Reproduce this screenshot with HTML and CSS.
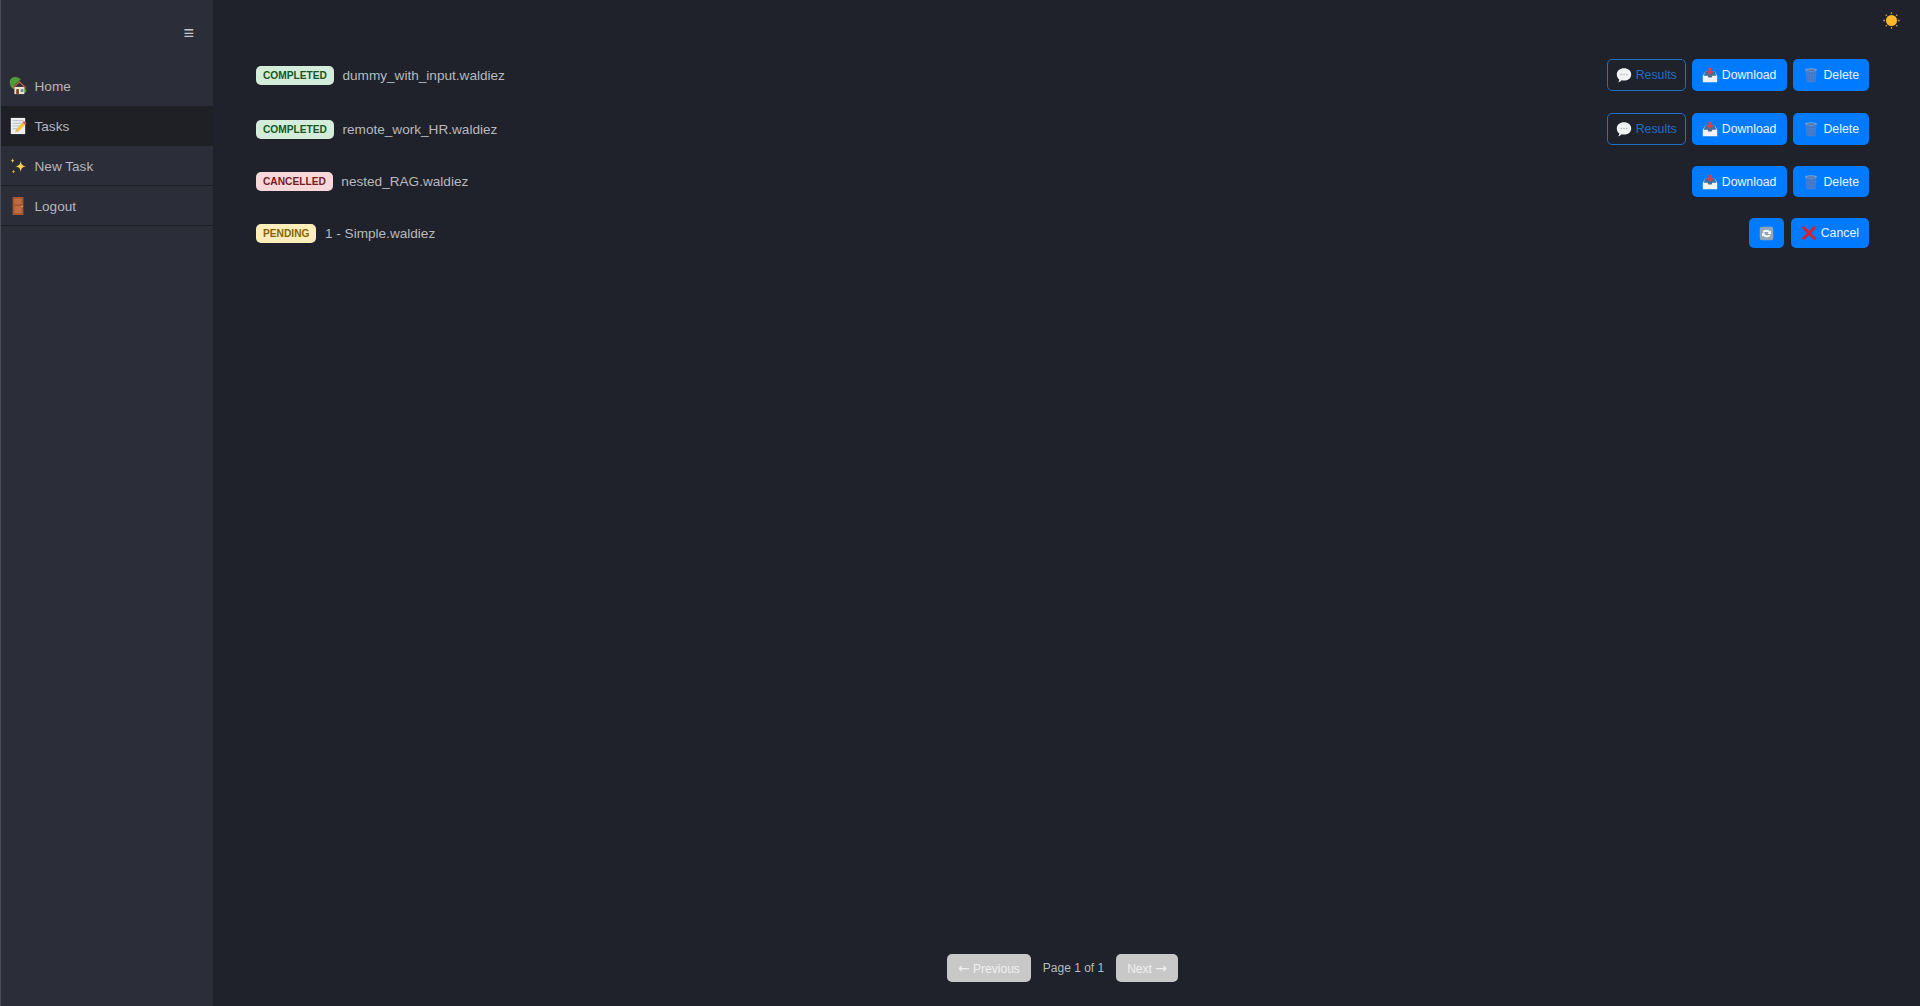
FILE: index.html
```html
<!DOCTYPE html>
<html lang="en">
<head>
    <meta charset="UTF-8">
    <meta name="viewport" content="width=device-width, initial-scale=1.0">
    <title>Tasks</title>
    <link rel="stylesheet" href="styles.css">
</head>
<body>
    <!-- Emoji drawn once, reused below -->
    <svg class="sprites" aria-hidden="true">
        <symbol id="i-home" viewBox="0 0 20 20">
            <path d="M1 7C0 3 3 0 7 0c3 0 5 1 6 3L6 9l0 5C3 13 1 10 1 7z" fill="#4f9a3a"/>
            <path d="M16 12c2 0 4 2 3 5l-3 1z" fill="#4f9a3a"/>
            <path d="M6 11h11v8H6z" fill="#efe3cf"/>
            <path d="M4 11.500 11.500 4.500 19 11.500l-1 1-6.500-6-6.500 6z" fill="#c0603f"/>
            <path d="M8 13.500h3V19H8z" fill="#7a4528"/>
            <path d="M13 13.500h3v3h-3z" fill="#5d86a8"/>
        </symbol>
        <symbol id="i-memo" viewBox="0 0 20 20">
            <path d="M2 1h16v18H2z" fill="#eceef0"/>
            <path d="M4 4h12M4 7h12M4 10h8M4 13h5" stroke="#b4bcc6" stroke-width="1"/>
            <path d="M7 17l1-3.500L15 6l3 2.500-7.500 7.500z" fill="#f2c23e"/>
            <path d="M7 17l1-3.500 2.500 2.500z" fill="#e9b48a"/>
            <path d="M15 6l1.500-1.500 3 2.500L18 8.500z" fill="#d9534f"/>
        </symbol>
        <symbol id="i-sparkles" viewBox="0 0 20 20">
            <path d="M13 4c.5 4.500 1.700 6 6 6.500-4.300.5-5.500 2-6 6.500-.5-4.500-1.700-6-6-6.500 4.300-.5 5.500-2 6-6.500z" fill="#f6d34a"/>
            <path d="M4 1c.3 2 .8 2.700 2.500 3C4.800 4.300 4.300 5 4 7c-.3-2-.8-2.700-2.500-3C3.200 3.700 3.700 3 4 1z" fill="#f6d34a"/>
            <path d="M5 14c.2 1.500.6 2 2 2.300-1.400.3-1.800.8-2 2.300-.2-1.500-.6-2-2-2.300 1.400-.3 1.800-.8 2-2.300z" fill="#e0a92e"/>
        </symbol>
        <symbol id="i-door" viewBox="0 0 20 20">
            <path d="M4 0h12v20H4z" fill="#a8562f"/>
            <path d="M6 2h8v6H6zM6 10h8v8H6z" fill="#bd6b3f"/>
            <circle cx="14.500" cy="10.500" r=".9" fill="#e8c14a"/>
        </symbol>
        <symbol id="i-chat" viewBox="0 0 20 20">
            <path d="M10 1.500c5 0 9 3 9 7.800S15 17 10 17c-1 0-2-.1-3-.4-1 1.200-2.500 2.200-4.500 2.400 1-1 1.500-2 1.600-3.500C2 14 1 12 1 9.300 1 4.500 5 1.500 10 1.500z" fill="#f1f2f4"/>
            <circle cx="6.500" cy="9.300" r=".9" fill="#a5adb6"/>
            <circle cx="10" cy="9.300" r=".9" fill="#a5adb6"/>
            <circle cx="13.500" cy="9.300" r=".9" fill="#a5adb6"/>
        </symbol>
        <symbol id="i-inbox" viewBox="0 0 20 20">
            <path d="M1 11l3-5h12l3 5v8H1z" fill="#f0f2f5"/>
            <path d="M4 6h12l2 5h-5l-1 2H8l-1-2H2z" fill="#3f6f9c"/>
            <path d="M8 1h4v4h2.500L10 10 5.500 5H8z" fill="#dd3f45"/>
        </symbol>
        <symbol id="i-trash" viewBox="0 0 20 20">
            <path d="M3 4h14l-1.500 15h-11z" fill="#4a7fd0"/>
            <path d="M5 5l1 13M8 5l.5 13M12 5l-.5 13M15 5l-1 13M4 8h12M4 12h12M5 16h10" stroke="#3f74c4" stroke-width=".7"/>
            <ellipse cx="10" cy="3.500" rx="7.500" ry="2" fill="#86a3cc"/>
            <ellipse cx="10" cy="3.800" rx="5.500" ry="1.100" fill="#4f77ad"/>
        </symbol>
        <symbol id="i-refresh" viewBox="0 0 20 20">
            <rect x="1" y="1" width="18" height="18" rx="3" fill="#8fa5bd"/>
            <path d="M4.500 8.500C5.500 6 7.500 5 10 5c2 0 3.500 1 4.500 2.200L16 6v4.500h-4.500l1.500-1.600C12.300 8 11.300 7.500 10 7.500c-1.300 0-2.300.4-3 1z" fill="#fff"/>
            <path d="M15.500 11.500C14.500 14 12.500 15 10 15c-2 0-3.500-1-4.500-2.200L4 14V9.500h4.500L7 11.100c.7.900 1.700 1.400 3 1.400 1.300 0 2.300-.4 3-1z" fill="#fff"/>
        </symbol>
        <symbol id="i-cross" viewBox="0 0 20 20">
            <path d="M1 3.500 3.500 1 10 7.500 16.500 1 19 3.500 12.500 10 19 16.500 16.500 19 10 12.500 3.500 19 1 16.500 7.500 10z" fill="#dc1f26"/>
        </symbol>
        <symbol id="i-sun" viewBox="0 0 20 20">
            <circle cx="10" cy="10" r="6.500" fill="#fbb829"/>
            <path d="M10 .3v2M10 17.700v2M.3 10h2M17.700 10h2M3.200 3.200l1.300 1.300M15.500 15.500l1.300 1.300M3.200 16.800l1.300-1.300M15.500 4.500l1.300-1.300" stroke="#c99a4e" stroke-width="1.500"/>
        </symbol>
    </svg>

    <aside class="sidebar">
        <div class="sidebar-top">
            <button class="menu-toggle">≡</button>
        </div>
        <nav class="nav">
            <a class="nav-item no-line"><svg class="nav-icon"><use href="#i-home"/></svg>Home</a>
            <a class="nav-item no-line active"><svg class="nav-icon"><use href="#i-memo"/></svg>Tasks</a>
            <a class="nav-item"><svg class="nav-icon"><use href="#i-sparkles"/></svg>New Task</a>
            <a class="nav-item"><svg class="nav-icon"><use href="#i-door"/></svg>Logout</a>
        </nav>
    </aside>

    <main class="content">
        <button class="theme-toggle" aria-label="Switch theme"><svg class="theme-icon"><use href="#i-sun"/></svg></button>

        <div class="task-list">
            <div class="task-row tall">
                <div class="task-info">
                    <span class="badge completed">COMPLETED</span>
                    <span class="task-name">dummy_with_input.waldiez</span>
                </div>
                <div class="task-actions">
                    <button class="btn outline"><svg class="btn-icon"><use href="#i-chat"/></svg>Results</button>
                    <button class="btn download"><svg class="btn-icon"><use href="#i-inbox"/></svg>Download</button>
                    <button class="btn"><svg class="btn-icon"><use href="#i-trash"/></svg>Delete</button>
                </div>
            </div>
            <div class="task-row">
                <div class="task-info">
                    <span class="badge completed">COMPLETED</span>
                    <span class="task-name">remote_work_HR.waldiez</span>
                </div>
                <div class="task-actions">
                    <button class="btn outline"><svg class="btn-icon"><use href="#i-chat"/></svg>Results</button>
                    <button class="btn download"><svg class="btn-icon"><use href="#i-inbox"/></svg>Download</button>
                    <button class="btn"><svg class="btn-icon"><use href="#i-trash"/></svg>Delete</button>
                </div>
            </div>
            <div class="task-row">
                <div class="task-info">
                    <span class="badge cancelled">CANCELLED</span>
                    <span class="task-name">nested_RAG.waldiez</span>
                </div>
                <div class="task-actions">
                    <button class="btn download short"><svg class="btn-icon"><use href="#i-inbox"/></svg>Download</button>
                    <button class="btn short"><svg class="btn-icon"><use href="#i-trash"/></svg>Delete</button>
                </div>
            </div>
            <div class="task-row">
                <div class="task-info">
                    <span class="badge pending">PENDING</span>
                    <span class="task-name">1 - Simple.waldiez</span>
                </div>
                <div class="task-actions wide-gap">
                    <button class="btn shorter" aria-label="Refresh"><svg class="btn-icon solo"><use href="#i-refresh"/></svg></button>
                    <button class="btn shorter"><svg class="btn-icon"><use href="#i-cross"/></svg>Cancel</button>
                </div>
            </div>
        </div>

        <div class="pagination">
            <button class="page-btn" disabled><span class="arrow">←</span> Previous</button>
            <span class="page-label">Page 1 of 1</span>
            <button class="page-btn" disabled>Next <span class="arrow">→</span></button>
        </div>
    </main>
</body>
</html>
```

FILE: styles.css
```css
* {
    margin: 0;
    padding: 0;
    box-sizing: border-box;
}

body {
    font-family: 'Liberation Sans', Arial, sans-serif;
    background: #1f222b;
    height: 100vh;
    display: flex;
    overflow: hidden;
    color: #b9bbc1;
}

button {
    font-family: inherit;
    border: none;
    cursor: pointer;
}

.sprites {
    display: none;
}

/* Sidebar */
.sidebar {
    width: 213px;
    flex-shrink: 0;
    background: #2b2d39;
    border-left: 1px solid #4a4c56;
}

.sidebar-top {
    height: 66px;
    display: flex;
    justify-content: flex-end;
    padding: 22px 19px 0 0;
}

.menu-toggle {
    background: none;
    color: #c4c6cc;
    font-size: 18px;
    line-height: 22px;
    height: 22px;
}

.nav-item {
    height: 40px;
    display: flex;
    align-items: center;
    padding-top: 1px;
    padding-left: 8px;
    font-size: 13.6px;
    color: #b4b6bd;
    border-bottom: 1px solid #1e1f25;
}

.nav-item.no-line {
    padding-top: 0;
    border-bottom: none;
}

.nav-item.active {
    background: #1f2026;
}

.nav-icon {
    width: 18px;
    height: 18px;
    margin-right: 7.5px;
    flex-shrink: 0;
}

/* Main area */
.content {
    flex: 1;
    display: flex;
    flex-direction: column;
    padding: 59px 51px 24px 43px;
    position: relative;
}

.theme-toggle {
    position: absolute;
    top: 12px;
    right: 20px;
    width: 17px;
    height: 17px;
    background: none;
}

.theme-icon {
    display: block;
    width: 17px;
    height: 17px;
}

.task-list {
    display: flex;
    flex-direction: column;
    gap: 21px;
}

.task-row {
    display: flex;
    align-items: center;
    justify-content: space-between;
}

.task-row.tall {
    margin-bottom: 1px;
}

.task-info {
    display: flex;
    align-items: center;
    gap: 8.5px;
}

.badge {
    height: 19px;
    line-height: 19px;
    padding: 0 7px;
    border-radius: 5px;
    font-size: 10.2px;
    font-weight: bold;
}

.badge.completed {
    background: #d4edda;
    color: #155724;
}

.badge.cancelled {
    background: #f8d7da;
    color: #721c24;
}

.badge.pending {
    background: #ffeeba;
    color: #856404;
}

.task-name {
    font-size: 13.6px;
    color: #b7b9bf;
}

.task-actions {
    display: flex;
    gap: 6px;
}

.task-actions.wide-gap {
    gap: 7px;
}

.btn {
    height: 32px;
    padding: 0 10px;
    display: flex;
    align-items: center;
    background: #007bff;
    color: #eaf3ff;
    font-size: 12.3px;
    border-radius: 5px;
}

.btn.download {
    padding-right: 11px;
}

.btn.short {
    height: 31px;
}

.btn.shorter {
    height: 30px;
}

.btn.outline {
    padding: 0 8px;
    background: transparent;
    color: #1f6fc4;
    border: 1px solid #1f6fc4;
}

.btn-icon {
    width: 16px;
    height: 16px;
    margin-right: 4px;
    flex-shrink: 0;
}

.btn-icon.solo {
    width: 15px;
    height: 15px;
    margin-right: 0;
}

/* Pagination */
.pagination {
    margin-top: auto;
    display: flex;
    align-items: center;
    justify-content: center;
    gap: 12px;
}

.page-btn {
    height: 28px;
    padding: 0 11px;
    background: #c8c8c8;
    color: #f0f0f0;
    font-size: 12px;
    line-height: 14px;
    border-radius: 5px;
}

.arrow {
    font-family: 'DejaVu Sans', sans-serif;
    font-size: 14px;
    line-height: 14px;
}

.page-label {
    font-size: 12px;
    color: #b7b9bf;
}
```
